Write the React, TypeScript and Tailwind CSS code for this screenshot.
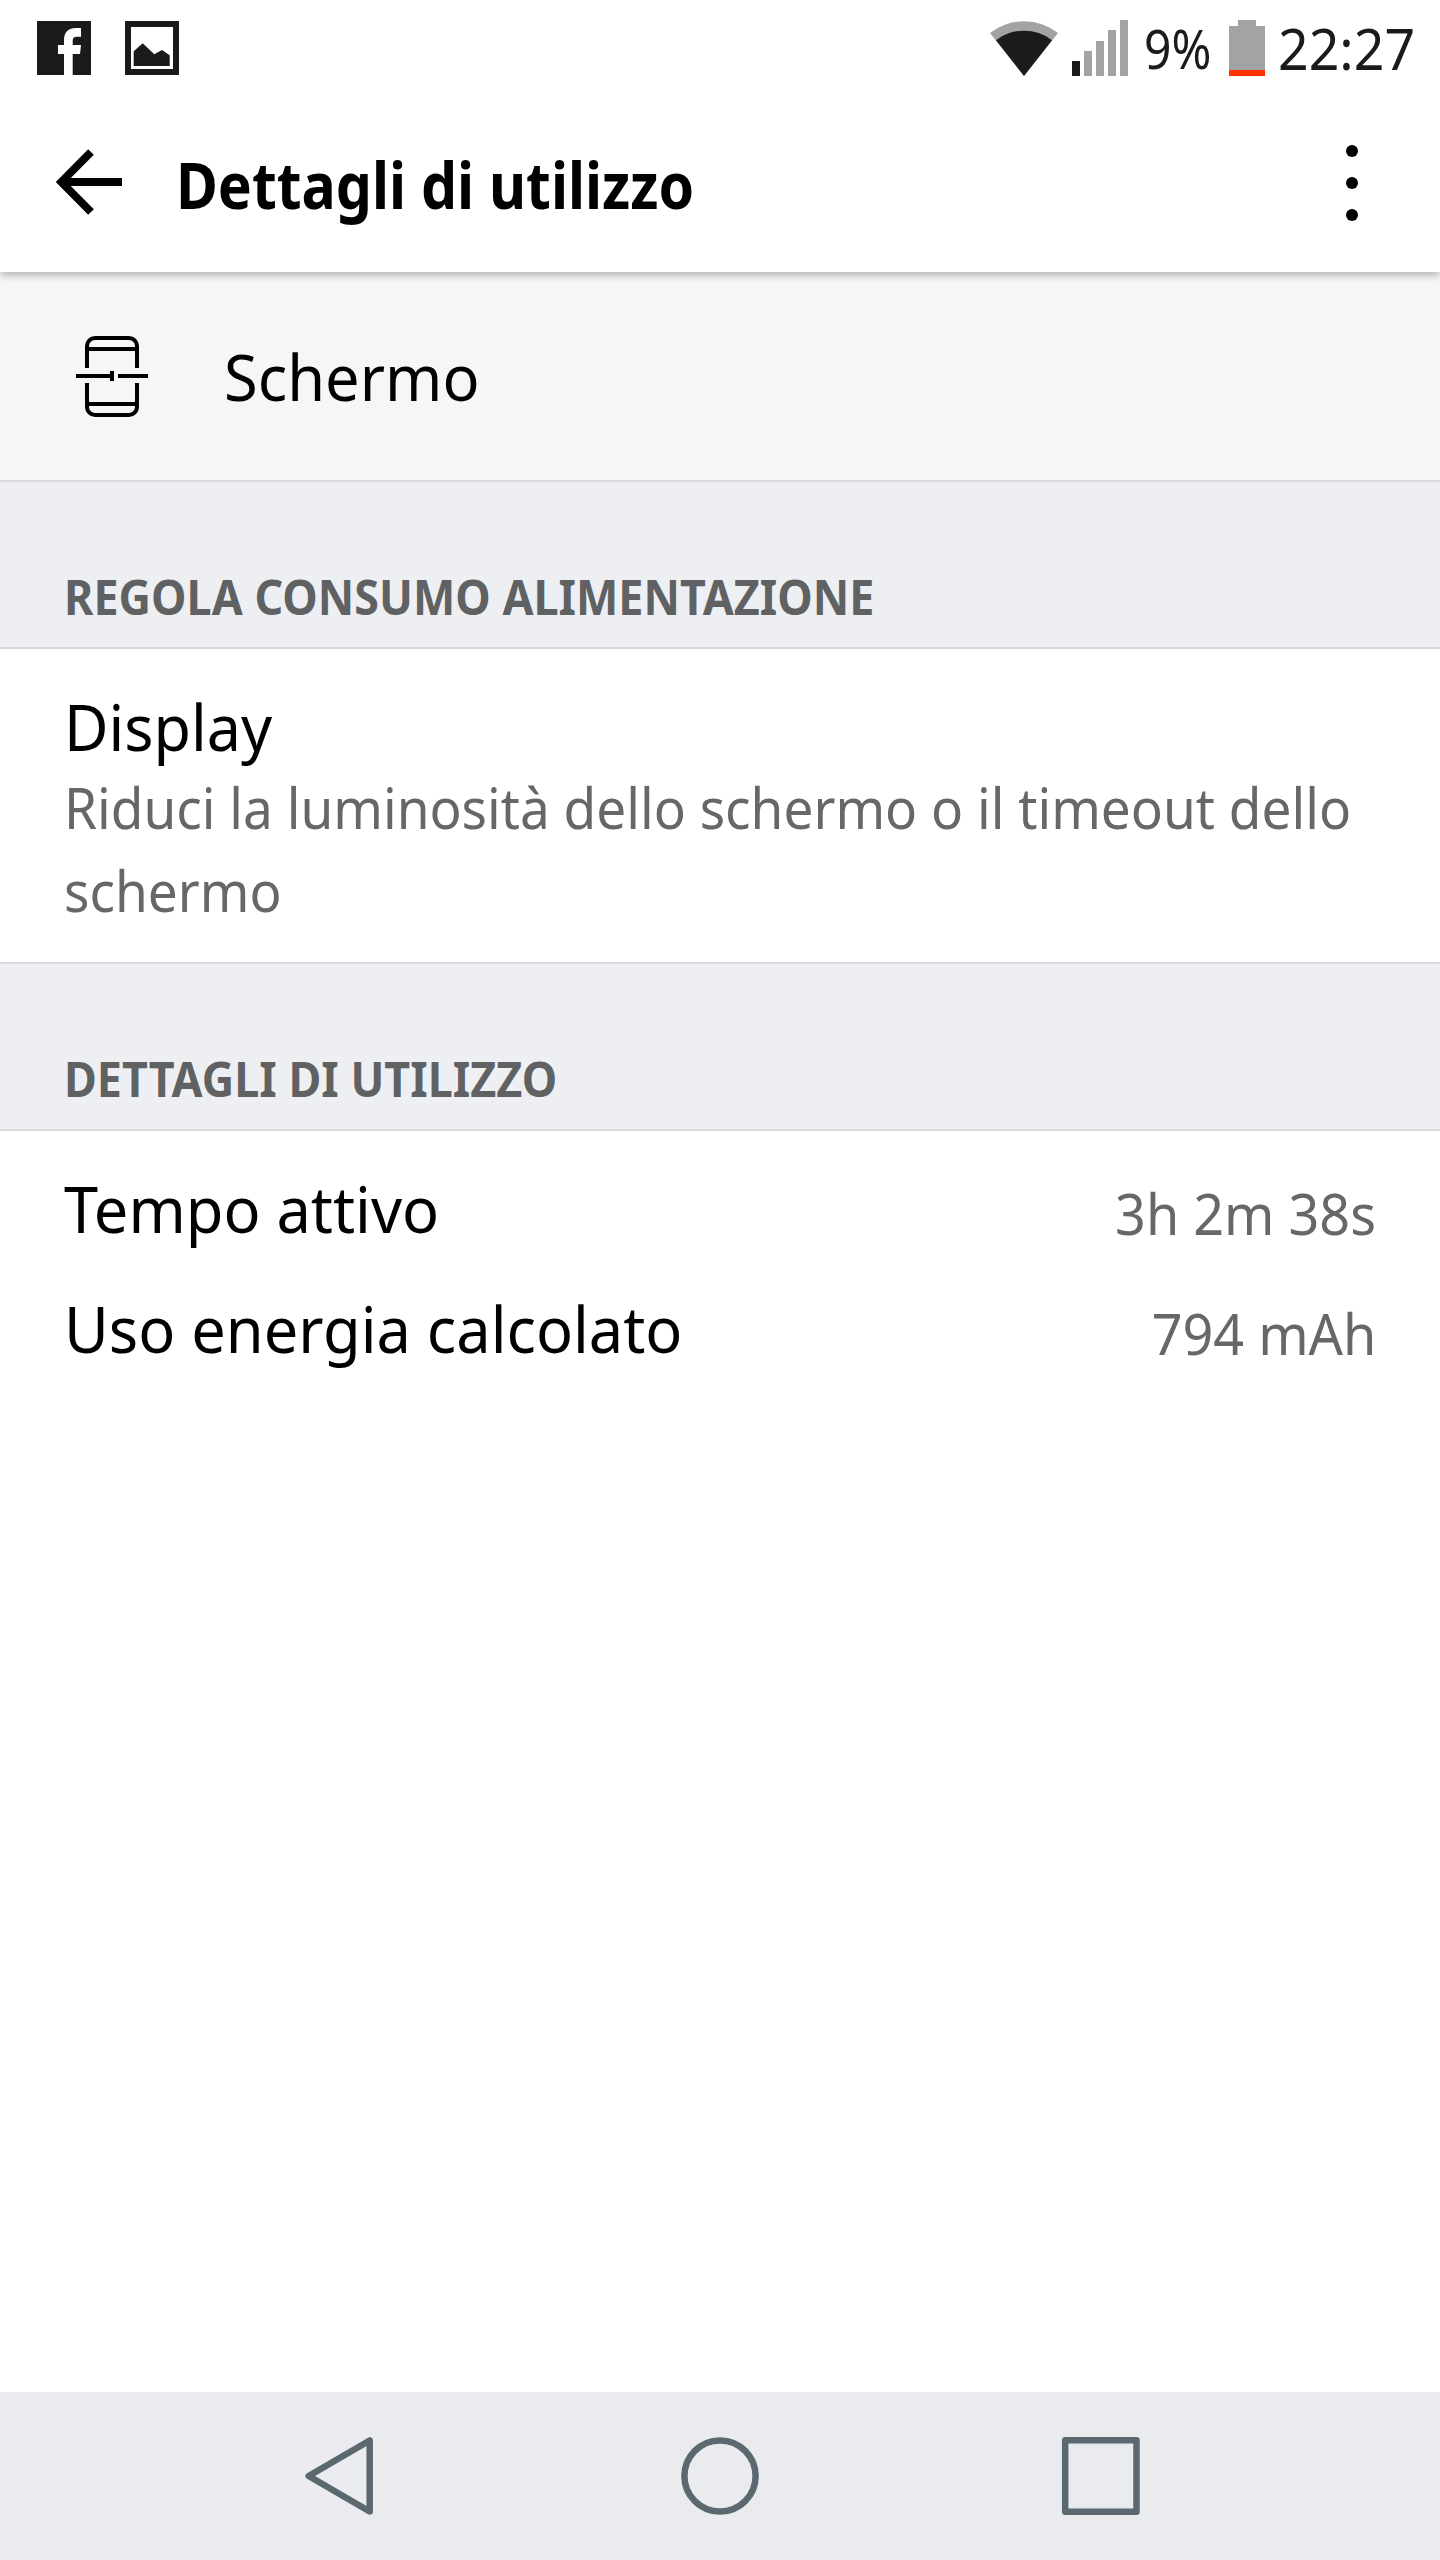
import React from 'react';

// Left side: notification icons, right side: connectivity, battery and clock
const StatusBar: React.FC = () => (
  <div className="flex h-24 pl-[37px] text-[#1b1b1b] leading-[96px]">
    <svg className="mt-[21px] w-[54px] h-[54px]" viewBox="0 0 54 54">
      <rect width="54" height="54" fill="#1b1b1b" />
      <path
        d="M27 54V33H21V24H27V19C27 11 31.5 7 39 7H44V15.7H39.5C37 15.7 35.7 17 35.7 19.5V24H44L43 33H35.7V54Z"
        fill="#fff"
      />
    </svg>
    <svg className="mt-[21px] ml-[34px] w-[54px] h-[54px]" viewBox="0 0 54 54">
      <rect width="54" height="54" fill="#1b1b1b" />
      <rect x="6" y="6" width="42" height="42" fill="#fff" />
      <path d="M8.7 45V30.3L17.7 22.3L29.3 33.3L37 29L44.7 34.3V45Z" fill="#1b1b1b" />
    </svg>

    <div className="flex ml-auto w-[450px]">
      <svg className="mt-5 w-[68px] h-14" viewBox="0 0 68 56">
        <path d="M34 56L0 13A54.8 54.8 0 0 1 68 13Z" fill="#a3a3a3" />
        <path d="M34 56L6 20.2A45.8 45.8 0 0 1 62 20.2Z" fill="#1b1b1b" />
      </svg>
      <div className="flex items-end gap-1 mt-5 ml-[14px] h-14">
        <div className="w-2 h-[15px] bg-[#1b1b1b]"></div>
        <div className="w-2 h-[25px] bg-[#a3a3a3]"></div>
        <div className="w-2 h-[35px] bg-[#a3a3a3]"></div>
        <div className="w-2 h-[46px] bg-[#a3a3a3]"></div>
        <div className="w-2 h-14 bg-[#a3a3a3]"></div>
      </div>
      <span className="ml-4 w-[85px] text-[54px] origin-left scale-x-[0.89]">9%</span>
      <div className="flex flex-col items-center mt-5 w-9 h-14">
        <div className="w-[18px] h-[6px] bg-[#a3a3a3]"></div>
        <div className="w-9 h-11 bg-[#a3a3a3]"></div>
        <div className="w-9 h-[6px] bg-[#ff3300]"></div>
      </div>
      <span className="ml-[13px] text-[56px] origin-left scale-x-[0.958]">22:27</span>
    </div>
  </div>
);

const Header: React.FC = () => (
  <header className="relative z-10 bg-white shadow-[0_4px_8px_-1px_rgba(0,0,0,0.3)]">
    <StatusBar />
    <div className="flex h-44 pl-14 pr-[82px]">
      <svg className="mt-[53px] w-[67px] h-[66px]" viewBox="0 0 67 66" fill="none" stroke="#000" strokeWidth="8">
        <path d="M35 3L5.3 33L35 63M5.3 33H66" />
      </svg>
      <h1 className="ml-[53px] text-[64px] font-bold leading-[178px] whitespace-nowrap origin-left scale-x-[0.893]">
        Dettagli di utilizzo
      </h1>
      <div className="flex flex-col gap-5 mt-[49px] ml-auto">
        <div className="w-3 h-3 bg-black rounded-full"></div>
        <div className="w-3 h-3 bg-black rounded-full"></div>
        <div className="w-3 h-3 bg-black rounded-full"></div>
      </div>
    </div>
  </header>
);

const ScreenIcon: React.FC = () => (
  <svg className="mt-16 w-[72px] h-[81px]" viewBox="0 0 72 81" fill="none" stroke="#000" strokeWidth="4">
    <path d="M11 32V10A8 8 0 0 1 19 2H53A8 8 0 0 1 61 10V32M11 13H61" />
    <path d="M11 47V71A8 8 0 0 0 19 79H53A8 8 0 0 0 61 71V47M11 68H61" />
    <path d="M0 40H36M42 40H72M36 35V45" />
  </svg>
);

const SectionTitle: React.FC<{ title: string }> = ({ title }) => (
  <div className="h-[167px] pt-[82px] px-16 bg-[#eeeff3] border-b-2 border-[#d9dadb]">
    <h2 className="text-5xl font-bold leading-[66px] text-[#606163] whitespace-nowrap origin-left scale-x-[0.935]">
      {title}
    </h2>
  </div>
);

const usage = [
  { label: 'Tempo attivo', value: '3h 2m 38s' },
  { label: 'Uso energia calcolato', value: '794 mAh' },
];

const NavBar: React.FC = () => (
  <nav className="flex items-center h-[168px] pl-[304px] bg-[#e9ebee]">
    <svg className="w-[70px] h-20" viewBox="0 0 70 80" fill="none" stroke="#5b6870" strokeWidth="6.5" strokeLinejoin="round">
      <path d="M65.7 4.5V75.5L4.7 40Z" />
    </svg>
    <svg className="ml-[306px] w-20 h-20" viewBox="0 0 80 80" fill="none" stroke="#5b6870" strokeWidth="6.5">
      <circle cx="40" cy="40" r="35.6" />
    </svg>
    <svg className="ml-[301px] w-20 h-20" viewBox="0 0 80 80" fill="none" stroke="#5b6870" strokeWidth="6.5" strokeLinejoin="round">
      <path d="M4.2 4.3H75.5V75.7H4.2Z" />
    </svg>
  </nav>
);

const App: React.FC = () => {
  return (
    <div className="flex flex-col w-[1440px] h-[2560px] overflow-hidden bg-white text-black font-['Noto_Sans',sans-serif]">
      <Header />

      <div className="flex h-[210px] pl-[76px] bg-[#f5f6f8] border-b-2 border-[#d9dadb]">
        <ScreenIcon />
        <span className="ml-[76px] text-[64px] leading-[210px] origin-left scale-x-[0.959]">Schermo</span>
      </div>

      <SectionTitle title="REGOLA CONSUMO ALIMENTAZIONE" />
      <div className="h-[315px] pt-[38px] px-16 border-b-2 border-[#d9dadb]">
        <h3 className="text-[64px] leading-[79px] origin-left scale-x-[0.953]">Display</h3>
        <p className="w-[1374px] text-[56px] leading-[83px] text-[#676767] origin-left scale-x-[0.949]">
          Riduci la luminosità dello schermo o il timeout dello schermo
        </p>
      </div>

      <SectionTitle title="DETTAGLI DI UTILIZZO" />
      <div className="flex-1 pt-[17px] px-16">
        {usage.map((item) => (
          <div key={item.label} className="flex justify-between h-[120px]">
            <span className="text-[64px] leading-[122px] origin-left scale-x-[0.958]">{item.label}</span>
            <span className="text-[56px] leading-[130px] text-[#676767] origin-right scale-x-[0.963]">{item.value}</span>
          </div>
        ))}
      </div>

      <NavBar />
    </div>
  );
};

export default App;
